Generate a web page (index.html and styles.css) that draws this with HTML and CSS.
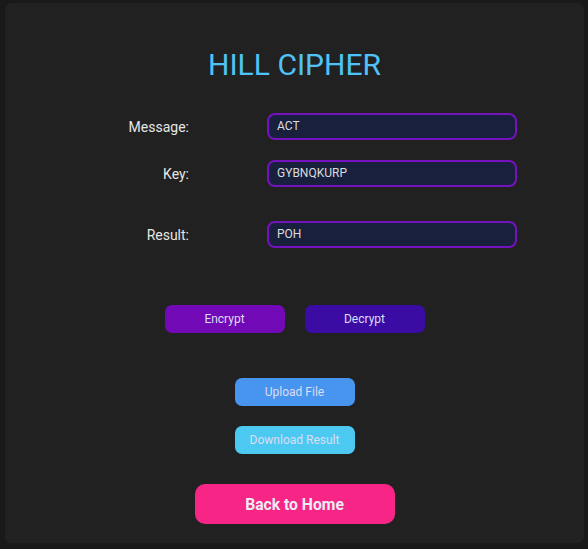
FILE: index.html
```html
<!DOCTYPE html>
<html>
<head>
<meta charset="utf-8">
<link rel="stylesheet" href="styles.css">
</head>
<body>
<div class="card">
  <h1 class="title">HILL CIPHER</h1>
  <div class="form">
    <label class="label">Message:</label>
    <div class="field">ACT</div>
    <label class="label">Key:</label>
    <div class="field">GYBNQKURP</div>
    <label class="label label-result">Result:</label>
    <div class="field field-result">POH</div>
  </div>
  <div class="actions">
    <button class="btn btn-encrypt">Encrypt</button>
    <button class="btn btn-decrypt">Decrypt</button>
  </div>
  <div class="files">
    <button class="btn btn-upload">Upload File</button>
    <button class="btn btn-download">Download Result</button>
  </div>
  <div class="home">
    <button class="btn-home">Back to Home</button>
  </div>
</div>
</body>
</html>
```
FILE: styles.css
```css
html, body {
  margin: 0;
  padding: 0;
  background: #191919;
  font-family: Roboto, "Liberation Sans", sans-serif;
}
body {
  padding: 3px 4px 6px 5px;
}
.card {
  background: #212121;
  border-radius: 6px;
  height: 540px;
  box-sizing: border-box;
  padding-top: 44px;
}
.title {
  margin: 0;
  text-align: center;
  color: #4fc3f7;
  font-weight: 400;
  font-size: 30px;
  line-height: 36px;
}
.form {
  display: grid;
  grid-template-columns: 118px 250px;
  column-gap: 77px;
  row-gap: 20px;
  justify-content: center;
  align-items: center;
  margin-top: 30px;
}
.label {
  text-align: right;
  color: #e6e6e6;
  font-size: 14px;
  padding-right: 1px;
}
.label-result, .field-result {
  margin-top: 14px;
}
.field {
  height: 27px;
  box-sizing: border-box;
  border: 2px solid #7412c0;
  border-radius: 8px;
  background: #18203d;
  color: #dcdcdc;
  font-size: 12px;
  line-height: 23px;
  padding-left: 8px;
}
.actions {
  display: flex;
  justify-content: center;
  gap: 20px;
  margin-top: 57px;
}
.btn {
  width: 120px;
  height: 28px;
  border: none;
  border-radius: 7px;
  font-family: Roboto, "Liberation Sans", sans-serif;
  font-size: 12px;
  color: #dcdcf5;
  padding: 0;
}
.btn-encrypt { background: #7209b7; }
.btn-decrypt { background: #3a0ca3; }
.files {
  display: flex;
  flex-direction: column;
  align-items: center;
  gap: 20px;
  margin-top: 45px;
}
.btn-upload { background: #4895ef; }
.btn-download { background: #4cc9f0; }
.home {
  display: flex;
  justify-content: center;
  margin-top: 30px;
}
.btn-home {
  width: 200px;
  height: 40px;
  border: none;
  border-radius: 10px;
  background: #f72585;
  color: #ececf5;
  font-family: Roboto, "Liberation Sans", sans-serif;
  font-weight: 700;
  font-size: 15.7px;
  padding: 0;
}
```
